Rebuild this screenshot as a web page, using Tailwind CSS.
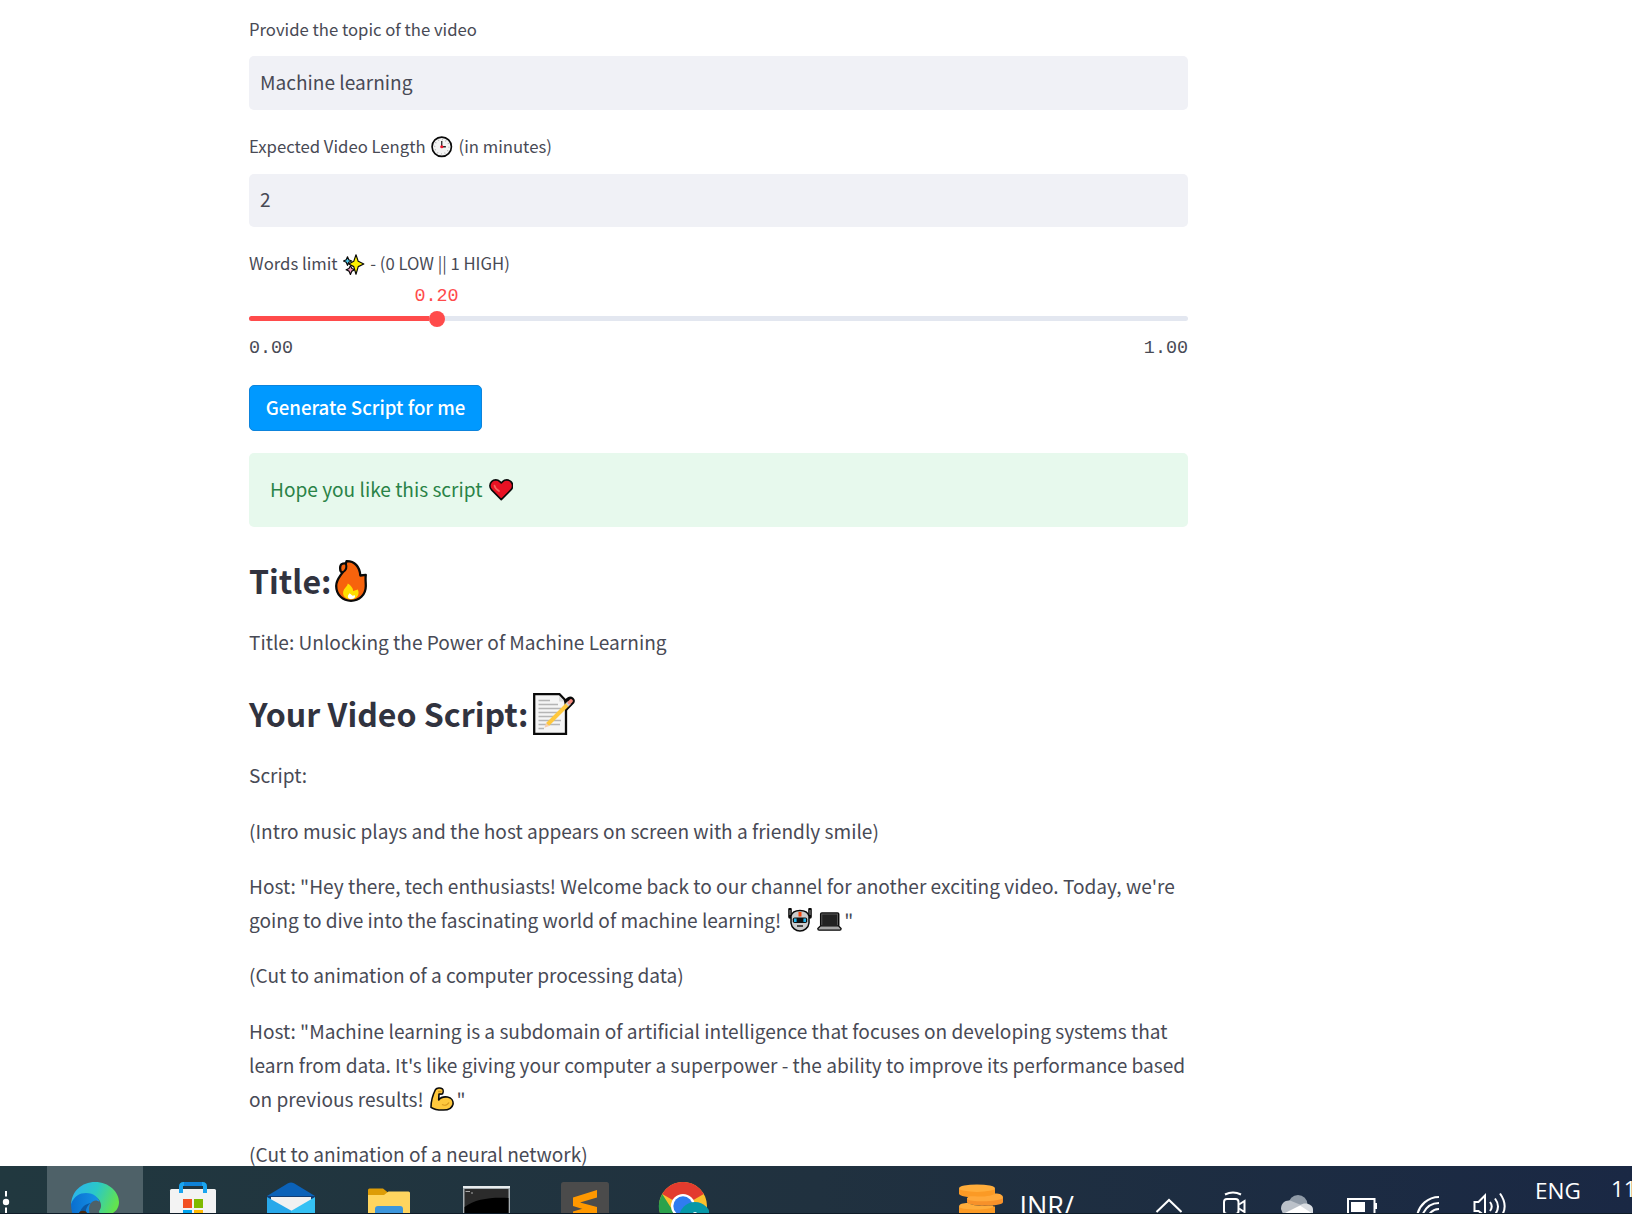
<!DOCTYPE html>
<html lang="en">
<head>
<meta charset="utf-8">
<title>Video script generator</title>
<script src="https://cdn.jsdelivr.net/npm/@tailwindcss/browser@4"></script>
</head>
<body class="h-[1214px] w-[1632px] overflow-hidden bg-white font-['Noto_Sans_CJK_SC','Source_Sans_Pro',sans-serif] text-[19.1px] leading-[34px] text-[#484a55]">
<div class="flex h-full flex-col">
<main class="h-[1166px] shrink-0 overflow-hidden">
<div class="ml-[249px] w-[939px] whitespace-nowrap">

  <!-- form fields -->
  <div class="h-14 pt-3 text-[16.7px]">Provide the topic of the video</div>
  <div class="flex h-[54px] items-center rounded-[5px] bg-[#f0f1f6] px-[11px] pb-0.5">Machine learning</div>
  <div class="flex h-16 pt-[19px] text-[16.7px]">
    <span>Expected Video Length</span>
    <svg class="mt-[7px] mr-[6px] ml-[5.5px] size-[21.5px]" viewBox="0 0 22 22"><circle cx="11" cy="11" r="9.9" fill="#f4f4f4" stroke="#0a0a0a" stroke-width="1.7"/><circle cx="11" cy="11" r="7.3" fill="none" stroke="#aaa" stroke-width="1.4" stroke-dasharray=".8 3.02"/><path d="M11 5.2V11h4.2" fill="none" stroke="#222" stroke-width="1.3"/><circle cx="11" cy="11" r="1.6" fill="#f2122a"/></svg>
    <span>(in minutes)</span>
  </div>
  <div class="flex h-[53px] items-center rounded-[5px] bg-[#f0f1f6] px-[11px] pb-[3px]">2</div>
  <div class="flex h-[54px] pt-[19px] text-[16.7px]">
    <span>Words limit</span>
    <svg class="mt-[7.500px] mr-[5.7px] ml-[5.5px] size-[21.5px]" viewBox="0 0 22 22" stroke="#0a0a0a" stroke-width="1.2" stroke-linejoin="round"><path d="M4.600 2.800l1.300 3 3 1.300-3 1.300-1.300 3.200-1.300-3.200-2.700-1.300 2.700-1.300z" fill="#4cc9ee"/><path d="M7.600 12l1.500 2.900 2.900 1.300-2.900 1.300-1.500 3.500-1.500-3.500-2.900-1.300 2.900-1.300z" fill="#f59ac0"/><path d="M13.300.8l2.300 6.700 5.700 2.700-5.700 2.700-2.300 7.800-2.300-7.800-5.100-2.700 5.100-2.700z" fill="#fff200"/></svg>
    <span>- (0 LOW || 1 HIGH)</span>
  </div>

  <!-- slider -->
  <div class="font-['Liberation_Mono',monospace] text-[18.4px] leading-[30px]">
    <div class="h-[30px] w-[375px] pt-px text-center text-[#ff4b4b]">0.20</div>
    <div class="mt-[5px] flex h-[5px] items-center overflow-visible rounded-full bg-[#e3e7f0]">
      <div class="h-[5px] w-[179.500px] rounded-l-full bg-[#ff4b4b]"></div>
      <div class="size-4 shrink-0 rounded-full bg-[#ff4b4b]"></div>
    </div>
    <div class="mt-3 flex h-[30px] justify-between pt-px"><span>0.00</span><span>1.00</span></div>
  </div>

  <button class="mt-[22px] flex h-[46px] w-[233px] items-center justify-center rounded-[5px] border border-[#0d84dc] bg-[#0099ff] pb-[3px] text-[18.65px] font-medium text-white">Generate Script for me</button>

  <div class="mt-[22px] flex h-[74px] rounded-[5px] bg-[#e7f9ed] px-[21px] pt-[18.5px] text-[#2a8347]">
    <span>Hope you like this script</span>
    <svg class="mt-[7px] ml-[6.5px] h-[22px] w-[24.500px]" viewBox="0 0 24.500 22"><path d="M12.250 20.600L2.600 10.900A5.700 5.700 0 0 1 10.900 2.600l1.350 1.400 1.350-1.400a5.700 5.700 0 0 1 8.300 8.300z" fill="#e81224" stroke="#0a0a0a" stroke-width="1.600" stroke-linejoin="round"/><path d="M5.500 6.600c.5 2.500 2 4 4.500 5.500" fill="none" stroke="#f4655c" stroke-width="1.700" stroke-linecap="round"/></svg>
  </div>

  <!-- generated result -->
  <h2 class="mt-7 flex text-[32.1px] leading-[50px] font-bold text-[#31333f]">
    <span>Title:</span>
    <svg class="mt-[5px] ml-[4px] h-[42px] w-8" viewBox="0 0 32 42"><path d="M11.500 1.200C19.500 1 24.700 6.500 25.300 15.500L30.800 14.800C30.200 19 30.800 21.500 30.800 26C30.800 35 24 40.800 16 40.800S1.200 35 1.200 26C1.200 20 5 16.500 7.500 12.500C4.500 12 4.200 5 7.300 3.800C8.500 3.300 9.500 3.300 10.800 3.600Z" fill="#f7630c" stroke="#0a0a0a" stroke-width="2.300" stroke-linejoin="round"/><path d="M7.500 12.500C11.200 10.500 12.300 7.500 10.800 3.600" fill="none" stroke="#0a0a0a" stroke-width="2"/><path d="M12.800 23.500C16 25.500 18 28 18.200 31L22.800 29.500C25 34 22.500 39 16 39.200 9 39.300 6.500 34 9 29.500 10.500 27.300 12.500 26 12.800 23.500z" fill="#ffde00"/><path d="M14.600 33.200l3 2.600 2.300-.6c.6 2.500-1 3.800-3.700 3.800-3.400 0-4.700-2.600-1.600-5.800z" fill="#fff"/></svg>
  </h2>
  <p class="mt-[20.400px]">Title: Unlocking the Power of Machine Learning</p>
  <h2 class="mt-[28.300px] flex text-[32.1px] leading-[50px] font-bold text-[#31333f]">
    <span>Your Video Script:</span>
    <svg class="mt-[5px] ml-[5px] size-[42px]" viewBox="0 0 42 42"><path d="M1.200 1.200H26.500L33 8V40.800H1.200z" fill="#f5f5f5" stroke="#0a0a0a" stroke-width="2.300"/><path d="M26 2.500V8.500H32" fill="#ddd"/><path d="M5.500 7.500H17M5.500 11.500H25M5.500 15.500H28M5.500 19.500H27M5.500 23.500H22M5.500 27.500H28M5.500 31.500H27M5.500 35.500H11" stroke="#b5b5b5" stroke-width="1.500"/><path d="M31 8L35.200 4.800C38.500 3 42.500 6.500 40.500 9.800L33 17.500" fill="#0a0a0a" stroke="#0a0a0a" stroke-width="1.500"/><path d="M14.500 31.500L35 11" stroke="#ffc83d" stroke-width="4"/><path d="M34 12L36.500 9.500" stroke="#ccc" stroke-width="4"/><path d="M36.500 9.500L38 8" stroke="#f58b7f" stroke-width="3.800" stroke-linecap="round"/><path d="M13 30l3.200 3-4.800 1.800z" fill="#f7cfae"/></svg>
  </h2>
  <div class="mt-[20.500px] flex flex-col gap-[21.350px]">
    <p>Script:</p>
    <p>(Intro music plays and the host appears on screen with a friendly smile)</p>
    <div>
      <p class="tracking-[0.004px]">Host: "Hey there, tech enthusiasts! Welcome back to our channel for another exciting video. Today, we're</p>
      <p class="flex">
        <span>going to dive into the fascinating world of machine learning!</span>
        <svg class="mt-[5.500px] ml-[6.500px] size-6" viewBox="0 0 24 24"><path d="M2 1.500V9M22 1.500V9" stroke="#0a0a0a" stroke-width="3.600" stroke-linecap="round"/><path d="M2 2V7M22 2V7" stroke="#777" stroke-width="1.200"/><path d="M3 8C5 .5 19 .5 21 8V15C20.500 20 16 23 12 23S3.500 20 3 15z" fill="#ccc" stroke="#0a0a0a" stroke-width="1.500"/><path d="M10.500 4h3v4.500h-3z" fill="#f7460c"/><rect x="4.800" y="9.500" width="14.400" height="5.600" rx="1.800" fill="#111"/><path d="M6 10.600h2.600v3.400H6zM15.400 10.600H18v3.400h-2.600z" fill="#22b8f0"/><path d="M9 18h6" stroke="#111" stroke-width="1.400"/></svg>
        <svg class="mt-[9px] mr-[2.500px] ml-[5px] h-[19px] w-[25px]" viewBox="0 0 25 19"><rect x="3.700" y=".9" width="18" height="13.600" rx="1.200" fill="#1d1d1d" stroke="#0a0a0a" stroke-width="1.500"/><rect x="4.800" y="2" width="15.800" height="11.600" fill="#222" stroke="#666" stroke-width=".8"/><path d="M3.500 13.800h18l2.600 2.800c0 1-.5 1.600-1.200 1.600H2.100C1.400 18.200.8 17.600.8 16.600z" fill="#a5a5a5" stroke="#0a0a0a" stroke-width="1.300"/></svg>
        <span>"</span>
      </p>
    </div>
    <p>(Cut to animation of a computer processing data)</p>
    <div>
      <p>Host: "Machine learning is a subdomain of artificial intelligence that focuses on developing systems that</p>
      <p>learn from data. It's like giving your computer a superpower - the ability to improve its performance based</p>
      <p class="flex">
        <span>on previous results!</span>
        <svg class="mt-[5.500px] mr-[3px] ml-[6px] size-6" viewBox="0 0 24 24"><path d="M5.500 2.500C7 .8 10.500.5 12.300 1.800 13.500 3 13.300 5.500 12.500 6.800 11.500 7.500 10 7 9 7L8.700 13C10.500 10.500 14 9.500 17.500 10 21.500 10.800 23.500 14 23 17.200 22 21.500 17.500 23.200 12.500 23 8 23 3.500 22 1 20.300 1 14 3 7.500 5.500 2.500z" fill="#ffc83d" stroke="#0a0a0a" stroke-width="1.600" stroke-linejoin="round"/><path d="M12 17.500c2.500 1.300 5.500.8 7-2M8 4.500h3.500" fill="none" stroke="#d99a1e" stroke-width="1.300"/></svg>
        <span>"</span>
      </p>
    </div>
    <p>(Cut to animation of a neural network)</p>
  </div>
</div>
</main>

<!-- taskbar -->
<footer class="flex h-12 shrink-0 overflow-hidden border-b border-[#0f1c28] bg-linear-to-r from-[#21383f] via-[#20313f] to-[#1a2844] font-['Open_Sans',sans-serif] text-white">
  <svg class="h-12 w-[47px] shrink-0" viewBox="0 0 47 48" fill="#fff"><path d="M5 25h2v5.500H5zM5 41.500h2V48H5z"/><circle cx="6" cy="36" r="3.200"/></svg>
  <div class="flex gap-0.5">
    <div class="flex h-12 w-24 justify-center bg-[#4e6168] pt-4">
      <svg class="size-12 shrink-0" viewBox="0 0 48 48"><defs><linearGradient id="eg" x1="0" x2="1" y1=".2" y2=".5"><stop stop-color="#2bb1f0"/><stop offset=".5" stop-color="#2bc9c6"/><stop offset="1" stop-color="#63e34d"/></linearGradient><linearGradient id="eb" x1="0" x2="1"><stop stop-color="#0a6fd0"/><stop offset="1" stop-color="#1593e6"/></linearGradient></defs><path d="M0 24C0 9 11 0 24 0c14 0 24 10 24 20 0 8-6 13-14 13-5 0-7-2-6-4 4-5 2-12-5-15C13 11 5 15 0 24z" fill="url(#eg)"/><path d="M0 22C3 14 9 11 15 11c8 0 13 5 13.500 9C24 16 18 20 18 27c0 8 4 14 11 18L24 48C10 48 0 38 0 22z" fill="url(#eb)"/><path d="M20 21c-7 4-7 14 0 22L8 34c1-7 5-12 12-13z" fill="#0c59a4"/><path d="M20 24c2-5 7-6 9-3 1 3 0 5-1 8 0 2 1 3 2 4h-9c-2-3-2-6-1-9z" fill="#4e6168"/><path d="M0 31h24v2H0z" fill="#c58a20"/><path d="M8 31c1-3 7-3 8 0z" fill="#4a2a10"/></svg>
    </div>
    <div class="flex h-12 w-24 justify-center pt-4">
      <svg class="size-12 shrink-0" viewBox="0 0 48 48"><path d="M1 8.500Q1 7 2.500 7H45.500Q47 7 47 8.500V48H1z" fill="#f3f3f3"/><path d="M12 11V4.500Q12 2 14.500 2H33.500Q36 2 36 4.500V11" fill="none" stroke="#1aa5f0" stroke-width="4"/><path d="M15 2H33" stroke="#0f82d8" stroke-width="4"/><path d="M14 4h20v3H14z" fill="#21353f"/><path d="M14 17h9v9h-9z" fill="#f25022"/><path d="M25 17h9v9h-9z" fill="#7fba00"/><path d="M14 28h9v9h-9z" fill="#00a4ef"/><path d="M25 28h9v9h-9z" fill="#ffb900"/></svg>
    </div>
    <div class="flex h-12 w-24 justify-center pt-4">
      <svg class="size-12 shrink-0" viewBox="0 0 48 48"><path d="M0 14L21 1.200Q24-.2 27 1.200L48 14V24H0z" fill="#0b62b8"/><path d="M0 14h48v3H0z" fill="#123d73"/><path d="M4 15h40v25H4z" fill="#f1f1f1"/><path d="M0 15L48 42V48H0z" fill="#28a8ea"/><path d="M48 15V48H24V29z" fill="#35c1f4"/></svg>
    </div>
    <div class="flex h-12 w-24 justify-center pt-4">
      <svg class="size-12 shrink-0" viewBox="0 0 48 48"><path d="M3 8Q3 6.500 4.500 6.500H18L23 10.500V20H3z" fill="#dd9c06"/><path d="M3 13H19L23.500 9.500H43.500Q45 9.500 45 11V48H3z" fill="#ffd55f"/><path d="M10 27Q10 24 13 24H35Q38 24 38 27V48H10z" fill="#3c96dc"/><path d="M17 31h14v5H17z" fill="#ffd55f"/></svg>
    </div>
    <div class="flex h-12 w-24 justify-center pt-4">
      <svg class="size-12 shrink-0" viewBox="0 0 48 48"><path d="M0 4H47V48H0z" fill="#a7afb3"/><path d="M0 4H47V6H0z" fill="#e8ecee"/><path d="M1.500 7H45.500V48H1.500z" fill="#2b2b2b"/><path d="M1.500 25C12 17 28 15 45.500 16V48H1.500z" fill="#000"/><path d="M2.500 9.500h4.500M8 11h2" stroke="#aaa" stroke-width="1.200"/></svg>
    </div>
    <div class="flex h-12 w-24 justify-center pt-4">
      <svg class="size-12 shrink-0" viewBox="0 0 48 48"><rect width="48" height="52" rx="2.500" fill="#4b4b4b"/><path d="M12 15.500L36 8V15.500L19 20.500 36 25V31.500L12 24z" fill="#ff9800"/><path d="M12 29.500L29 24.500 36 26V31.500L18 36H12z" fill="#ff9800"/></svg>
    </div>
    <div class="flex h-12 w-24 justify-center pt-4">
      <svg class="h-12 w-[52px] shrink-0" viewBox="-2 0 52 48"><circle cx="24" cy="24" r="24" fill="#fbc02d"/><path d="M24 24L3.200 12A24 24 0 0 1 44.800 12z" fill="#e33b2e"/><path d="M3.200 12A24 24 0 0 0 24 48L26 35 14 29z" fill="#2ba24c"/><circle cx="24" cy="24" r="12" fill="#fff"/><circle cx="24" cy="24" r="9.700" fill="#2f7cf0"/><circle cx="36" cy="36" r="16" fill="#0598a8"/><path d="M34.500 30h3v4h-3z" fill="#d5f2f5"/></svg>
    </div>
  </div>
  <svg class="mt-[18px] ml-[227px] h-[30px] w-[46px] shrink-0" viewBox="0 0 46 30"><path d="M1 4.500V9.500C1 15 37 15 37 9.500V4.500z" fill="#fb9a25"/><ellipse cx="19" cy="4.200" rx="18" ry="3.700" fill="#ffad3b"/><path d="M9 14V18C9 23 45 23 45 18V13.500z" fill="#f7912a"/><path d="M9 15C9 11 16 12.500 24 12.500S37 10 37 9.500C42 9.500 45 11 45 13.500 44 18 12 18.500 9 15z" fill="#ffa83a"/><path d="M1 23V34H37V22.500z" fill="#fb9a25"/><path d="M1 22.500C1 20 5 19 10 19 14 21.500 25 22.500 34 21.500 37 22 37 25 19 25.500 8 25.500 1 24.500 1 22.500z" fill="#ffad3b"/></svg>
  <span class="mt-[23px] ml-[15.500px] w-[60px] shrink-0 text-[27px]">INR/</span>
  <svg class="ml-[75.500px] h-12 w-[27px] shrink-0" viewBox="0 0 27 48" fill="none" stroke="#fff" stroke-width="2"><path d="M1.500 46L14 34 26.500 46"/></svg>
  <svg class="ml-[39.500px] h-12 w-6 shrink-0" viewBox="0 0 24 48" fill="none" stroke="#fff" stroke-width="2"><path d="M3 28.500Q11 24.500 19 28.500"/><rect x="2" y="33" width="14.500" height="15" rx="3"/><path d="M17 38.500L22.500 35V46L17 42.500"/></svg>
  <svg class="ml-[35px] h-12 w-[33px] shrink-0" viewBox="0 0 33 48"><circle cx="17" cy="38.500" r="9.500" fill="#8f9aa7"/><path d="M0 43C0 37 4 34 9 34.500L20 39 14 48H2z" fill="#bcc2ca"/><path d="M19 39C24 35.500 32 38 32 43.500V48H18z" fill="#d9dde2"/><path d="M2 48L19 39.500 32 48z" fill="#fff"/></svg>
  <svg class="ml-[33px] h-12 w-[31px] shrink-0" viewBox="0 0 31 48"><path d="M1 33H27.500V48H1z" fill="none" stroke="#fff" stroke-width="2"/><path d="M4 36H18V46H4zM28 37h2v6h-2z" fill="#fff"/></svg>
  <svg class="ml-[38px] h-12 w-6 shrink-0" viewBox="0 0 24 48" fill="none" stroke="#fff" stroke-width="2"><path d="M1 50C3 39 12 31 23 31M6 50C9 42 15 37 23 37M12 50C15 45 18 43 23 43"/></svg>
  <svg class="ml-[33px] h-12 w-[34px] shrink-0" viewBox="0 0 34 48" fill="none" stroke="#fff" stroke-width="2"><path d="M1.500 36H5.500L12 29.500V50L5.500 45H1.500z"/><path d="M17 36Q20.500 40.500 17 45M22 32.500Q28 40.500 22 48.500M27 27.500Q35.500 39.500 28.500 50"/></svg>
  <span class="mt-[8px] ml-[28.500px] w-[50px] shrink-0 text-[22.500px]">ENG</span>
  <span class="mt-[6px] ml-[26px] shrink-0 text-[22.500px]">11</span>
</footer>
</div>
</body>
</html>
